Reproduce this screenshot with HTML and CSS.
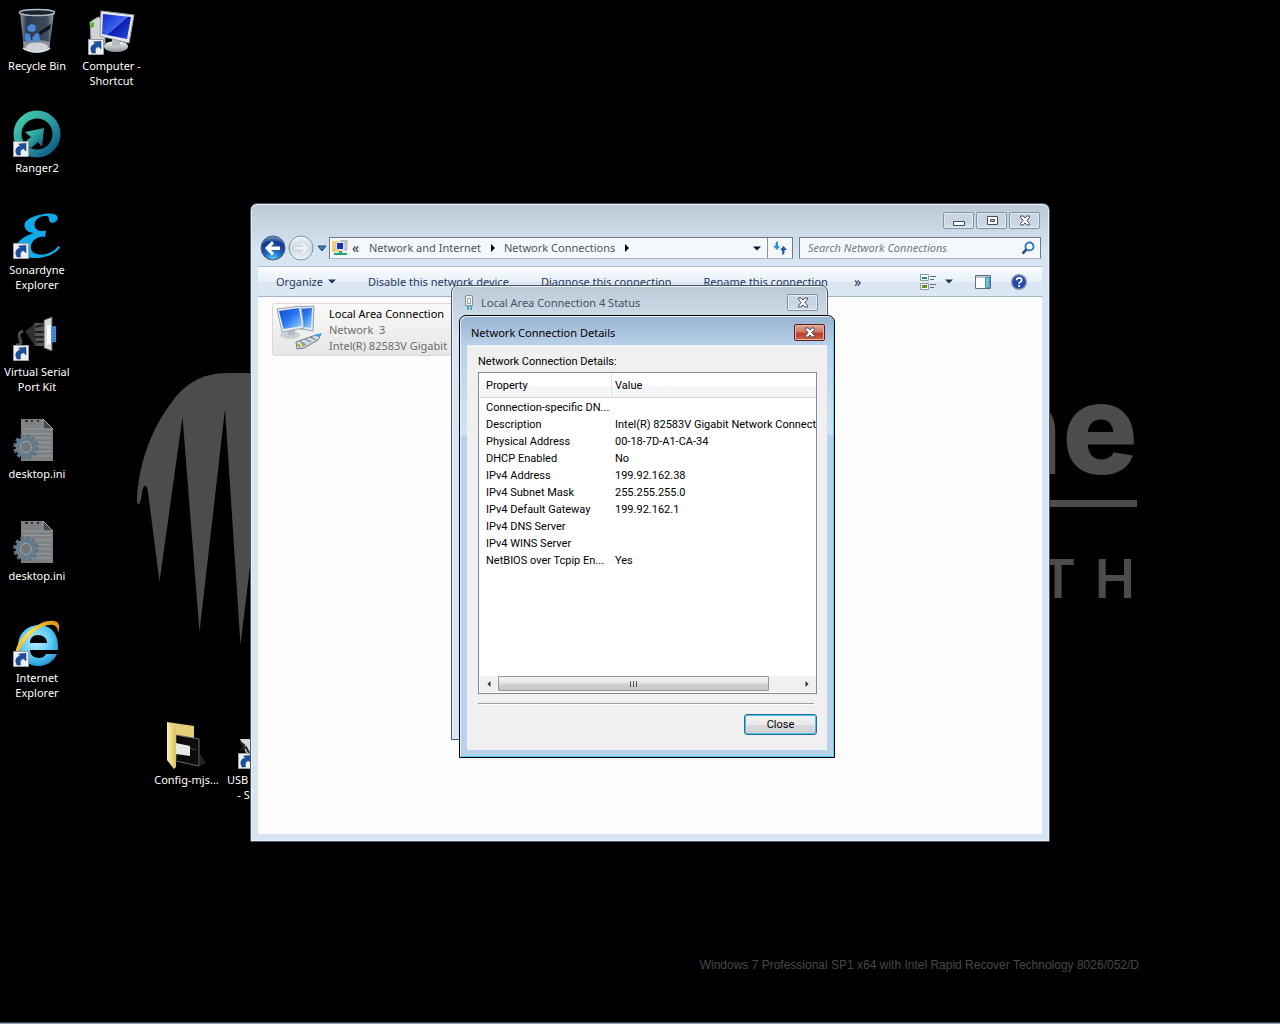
FILE: index.html
```html
<!DOCTYPE html>
<html lang="en">
<head>
<meta charset="utf-8">
<meta name="viewport" content="width=device-width, initial-scale=1">
<title>Network Connection Details</title>
<link rel="stylesheet" href="styles.css">
</head>
<body>
<svg class="defs" width="0" height="0" aria-hidden="true">
  <defs>
    <linearGradient id="screen" x1="0" y1="0" x2="1" y2="1"><stop offset="0" stop-color="#1426c8"/><stop offset=".5" stop-color="#3c66ec"/><stop offset=".52" stop-color="#0c1cb0"/><stop offset="1" stop-color="#2a50e0"/></linearGradient>
    <linearGradient id="lan" x1="0" y1="0" x2="1" y2="1"><stop offset="0" stop-color="#1048d0"/><stop offset=".5" stop-color="#2a78f0"/><stop offset="1" stop-color="#a4dcff"/></linearGradient>
    <linearGradient id="teal" x1="0" y1="0" x2="1" y2="1"><stop offset="0" stop-color="#47cdb0"/><stop offset=".5" stop-color="#2b9e9c"/><stop offset="1" stop-color="#0c5487"/></linearGradient>
    <linearGradient id="glass" x1="0" y1="0" x2="1" y2="0"><stop offset="0" stop-color="#8798a8"/><stop offset=".2" stop-color="#2a3a4c"/><stop offset=".8" stop-color="#3c4c5c"/><stop offset="1" stop-color="#96a4b0"/></linearGradient>
    <linearGradient id="folder" x1="0" y1="0" x2="1" y2="0"><stop offset="0" stop-color="#fdf2b0"/><stop offset="1" stop-color="#dcc160"/></linearGradient>
    <linearGradient id="metal" x1="0" y1="0" x2="0" y2="1"><stop offset="0" stop-color="#ffffff"/><stop offset="1" stop-color="#8c9098"/></linearGradient>
    <radialGradient id="ie" cx=".45" cy=".4" r=".65"><stop offset="0" stop-color="#baf2ff"/><stop offset=".6" stop-color="#58c8f4"/><stop offset="1" stop-color="#1c8ccc"/></radialGradient>
    <linearGradient id="gold" x1="0" y1="1" x2="1" y2="0"><stop offset="0" stop-color="#f0a810"/><stop offset=".5" stop-color="#ffe050"/><stop offset="1" stop-color="#d88c08"/></linearGradient>
    <radialGradient id="orb" cx=".5" cy=".95" r=".95"><stop offset="0" stop-color="#55c8f8"/><stop offset=".4" stop-color="#1c64b8"/><stop offset=".75" stop-color="#123a8c"/><stop offset="1" stop-color="#7aa0d4"/></radialGradient>
    <linearGradient id="pale" x1="0" y1="0" x2="0" y2="1"><stop offset="0" stop-color="#f2f6fa"/><stop offset=".5" stop-color="#ccd8e2"/><stop offset="1" stop-color="#f0f5fa"/></linearGradient>
    <symbol id="shortcut" viewBox="0 0 16 16">
      <path d="M.5.5h15v15H.5z" fill="#eef0f2" stroke="#9a9ea4"/>
      <path d="M4 14C1.500 9.500 3 5.500 7.500 5L5.500 3l7.500-.8V10l-2.200-2.200C7.800 8 7 10 7.500 14z" fill="#1d4f9e" stroke="#123a7c" stroke-width=".5"/>
    </symbol>
    <symbol id="inifile" viewBox="0 0 48 48">
      <path d="M8 3h22l10 10v32H8z" fill="#7f8285"/>
      <path d="M30 3v10h10z" fill="#4a4c4f" stroke="#a4a6a8"/>
      <path d="M10 13h19M10 17.500h28M10 22h28M10 26.500h28M10 31h28M10 35.500h28M10 40h28" stroke="#999c9f"/>
      <path d="M12 5h3M18 5h2M24 5h2" stroke="#303234" stroke-width="2"/>
      <circle cx="13" cy="31" r="10.500" fill="none" stroke="#5f7382" stroke-width="4.500" stroke-dasharray="3.300 2.197"/>
      <circle cx="13" cy="31" r="7.500" fill="none" stroke="#667c8c" stroke-width="6"/>
      <circle cx="13" cy="31" r="5.500" fill="#747779" stroke="#93a6b2"/>
    </symbol>
    <symbol id="cross" viewBox="0 0 14 11">
      <path d="M2.500 1h2.800L7 3.100 8.700 1h2.800v1.400L8.900 5.500l2.600 3.100V10H8.700L7 7.900 5.300 10H2.500V8.600l2.600-3.100-2.600-3.100z" fill="#fff" stroke="#474d57"/>
    </symbol>
    <symbol id="caret" viewBox="0 0 8 5"><path d="M0 .5h8L4 4.500z" fill="currentColor"/></symbol>
  </defs>
</svg>

<main class="desktop">
  <svg class="claw" viewBox="0 0 114 274" aria-hidden="true">
    <path d="M114 0H90C64 0 47 12 35 29C15 54 1 92 0 127Q0 131 2 131C5 129 4 114 8 113Q10 112 11 119L22.500 209 45.500 44 62.500 259 88 36 103.500 272 114 185z" fill="#4c4c4c"/>
  </svg>
  <svg class="brand" viewBox="0 0 150 240" aria-hidden="true">
    <g fill="#4c4c4c">
      <text class="brand-name" x="138" y="103" text-anchor="end">ne</text>
      <path d="M0 129h137v7H0z"/>
      <text class="brand-tag" x="58" y="227" text-anchor="middle">T</text>
      <text class="brand-tag" x="115" y="227" text-anchor="middle">H</text>
    </g>
  </svg>
  <p class="build">Windows 7 Professional SP1 x64 with Intel Rapid Recover Technology 8026/052/D</p>

  <nav class="icons" aria-label="Desktop">
    <a class="icon c1 r1" href="#"><svg viewBox="0 0 48 48">
      <path d="M7 4L11 42Q24 48 36 42L41 4z" fill="url(#glass)"/>
      <path d="M10 34l1 8Q24 48 36 42l1-8Q24 30 10 34z" fill="#a8adb0" opacity=".7"/>
      <ellipse cx="24" cy="4.500" rx="17.500" ry="3" fill="#18222c" stroke="#b0bcc6" stroke-width="1.500"/>
      <path d="M14 19l4-3 4 1 1 5-3 2-5-1zM12 25l5 1 1 6-2 3-4-3zM19 30l4-5 3 1 1 6-5 3z" fill="#4d84dc"/>
      <path d="M26 24l12-8-1 5-10 6z" fill="#0c141c"/>
      <ellipse cx="24" cy="39" rx="11" ry="4.500" fill="#e4e6e7" opacity=".8"/>
      <path d="M10 40Q24 48 37 40" fill="none" stroke="#dce2e6" stroke-width="1.500"/></svg><span>Recycle Bin</span></a>
    <a class="icon c2 r1" href="#"><svg viewBox="0 0 48 48">
      <path d="M2 14L10 9l7 2v25L3 34z" fill="#d0d4d4" stroke="#8a8e90"/><path d="M3 15l3-1v5l-3 1z" fill="#5ab830"/>
      <ellipse cx="28" cy="38.500" rx="12" ry="5.500" fill="url(#metal)"/><path d="M24 29h8v9h-8z" fill="#b8bcc0"/>
      <path d="M13 3l33 4-5 28-29-7z" fill="#e6e8ec" stroke="#9da2a8"/><path d="M15 6l28 3-4 22-25-5z" fill="url(#screen)"/>
      <use href="#shortcut" x="0" y="31" width="16" height="16"/></svg><span>Computer -<br>Shortcut</span></a>
    <a class="icon c1 r2" href="#"><svg viewBox="0 0 48 48">
      <circle cx="24" cy="24" r="19.500" fill="none" stroke="url(#teal)" stroke-width="8"/>
      <path d="M31 18L12 22l6 5-7 6 7 5 7-6 4 5z" fill="url(#teal)"/>
      <use href="#shortcut" x="0" y="31" width="16" height="16"/></svg><span>Ranger2</span></a>
    <a class="icon c1 r3" href="#"><svg viewBox="0 0 48 48">
      <path d="M44.500 5C43 1.500 37 1 31 2C20 3.500 10 8 11.500 14.500C12.500 19 17 21 21 21C9 25 2 31 3 37C4 44 14 46.500 25 46C36 45 45 40 47 35L45.500 34C40 40 34 43 27 42.500C19 42 16.500 37 18.500 32C21 26 27 24 32 25L33 18.500C27 20 21 17.500 21.500 12C22 7 28 3.500 33 4C37 4 35 7 37 10C40 12.500 45.500 9 44.500 5z" fill="#12a9e8"/>
      <use href="#shortcut" x="0" y="31" width="16" height="16"/></svg><span>Sonardyne<br>Explorer</span></a>
    <a class="icon c1 r4" href="#"><svg viewBox="0 0 48 48">
      <path d="M3 31q7 0 4-6t3-8" fill="none" stroke="#4c4c4c" stroke-width="3"/>
      <path d="M12 17l10-7h11v22H22z" fill="#303030"/><path d="M21 9h11v23h-9z" fill="#555"/><path d="M22 13l9-2M22 18h9M22 23h9M23 28h8" stroke="#1e1e1e" stroke-width="2"/>
      <path d="M31 6l8-3v34l-8-3z" fill="#dcdcdc" stroke="#4c4c4c"/><path d="M35 13l8-1v16l-8 1z" fill="#3f8fe0"/><path d="M34 12l4-1v18l-4 2z" fill="#fff"/><path d="M41 14v13" stroke="#144a94" stroke-dasharray="1 2"/>
      <use href="#shortcut" x="0" y="31" width="16" height="16"/></svg><span>Virtual Serial<br>Port Kit</span></a>
    <a class="icon c1 r5" href="#"><svg viewBox="0 0 48 48"><use href="#inifile"/></svg><span>desktop.ini</span></a>
    <a class="icon c1 r6" href="#"><svg viewBox="0 0 48 48"><use href="#inifile"/></svg><span>desktop.ini</span></a>
    <a class="icon c1 r7" href="#"><svg viewBox="0 0 48 48">
      <path d="M45 30H17c0 5 4 8 9 8 4 0 6-2 7-4h11C41 41 34 46 26 46 14 46 5 38 5 26S14 5 26 5s20 9 19 25zM17 23h17c0-5-4-8-9-8s-8 3-8 8z" fill="url(#ie)"/>
      <path d="M3 38C-2 22 26-2 41 1c6 1 6 6 4 12 0-4-1-7-5-8C28 3 10 18 3 38z" fill="url(#gold)"/>
      <use href="#shortcut" x="0" y="31" width="16" height="16"/></svg><span>Internet<br>Explorer</span></a>
    <a class="icon c3 r8" href="#"><svg viewBox="0 0 48 48">
      <path d="M4 0l27 4v32H14z" fill="#e4cc78"/>
      <path d="M13 13l23 4v27l-23-5z" fill="#0c0c0c" stroke="#6c6c6c"/><path d="M13 21l14 3v10l-14-2z" fill="#e8e8e8"/><path d="M27 26l6 2" stroke="#444"/>
      <path d="M4 0l9 6v39l-2 2-7-9z" fill="url(#folder)"/><path d="M37 32l6 9-6 3z" fill="#222"/></svg><span>Config-mjs...</span></a>
    <a class="icon c4 r8" href="#"><svg viewBox="0 0 48 48">
      <path d="M2 17h26v18H10z" fill="#d8d8d8"/><path d="M2 20l4 3-2 4 4-2 3 6" fill="none" stroke="#222" stroke-width="2"/>
      <use href="#shortcut" x="0" y="31" width="16" height="16"/></svg><span>USB<i class="more"></i><br>- S<i class="more"></i></span></a>
  </nav>

  <section class="window explorer" aria-label="Network Connections">
    <header class="caption">
      <button aria-label="Minimize"><svg viewBox="0 0 14 11"><path d="M1.500 6.500h11v4h-11z" fill="#fff" stroke="#474d57"/></svg></button>
      <button aria-label="Maximize"><svg viewBox="0 0 14 11"><path d="M2.500 1.500h10v8h-10zM5.500 4.500v2h4v-2z" fill="#fff" stroke="#474d57"/></svg></button>
      <button aria-label="Close"><svg viewBox="0 0 14 11"><use href="#cross"/></svg></button>
    </header>
    <div class="navbar">
      <button class="round" aria-label="Back"><svg viewBox="0 0 26 26"><circle cx="13" cy="13" r="12" fill="url(#orb)" stroke="#4c5c74"/><path d="M5 13l7-7 2 2.500-3 3h9v3.500h-9l3 3-2 2.500z" fill="#fff"/></svg></button>
      <button class="round" aria-label="Forward"><svg viewBox="0 0 26 26"><circle cx="13" cy="13" r="12" fill="url(#pale)" stroke="#8493a4"/><path d="M21 13l-7-7-2 2.500 3 3H6V15h9l-3 3 2 2.500z" fill="#eef2f6" stroke="#c0cad4" stroke-width=".6"/></svg></button>
      <button class="recent" aria-label="Recent pages"><svg viewBox="0 0 10 7"><path d="M1 1h8L5 6z" fill="#3c84bc" stroke="#1c4468"/></svg></button>
      <div class="address">
        <svg class="place" viewBox="0 0 16 16"><path d="M0 1h7v11H0z" fill="#ecd070"/><path d="M9 0h6v10H9z" fill="#c8ccd0" stroke="#888" stroke-width=".5"/><path d="M4.500 2.500h7v7h-7z" fill="#1c30b8" stroke="#e4e8f0"/><path d="M7 11h3v2h5v2H2v-2h5z" fill="#22a878"/></svg>
        <a class="up" href="#">«</a>
        <a href="#">Network and Internet</a><i class="sep"></i>
        <a href="#">Network Connections</a><i class="sep"></i>
        <button class="drop" aria-label="Previous locations"><svg viewBox="0 0 8 5"><use href="#caret"/></svg></button>
        <button class="refresh" aria-label="Refresh"><svg viewBox="0 0 16 14"><path d="M6.500 0Q3 .5 3.500 5H1l4 4 3-4H6Q5.500 2 6.500 0z" fill="#2c8cd0"/><path d="M10 14q3-.5 2.500-5H15l-3.500-4L8 9h2q.5 3 0 5z" fill="#1c5ca4"/></svg></button>
      </div>
      <label class="search"><input type="search" placeholder="Search Network Connections" aria-label="Search Network Connections"><svg viewBox="0 0 14 14"><circle cx="8.500" cy="5.500" r="4" fill="#fff" stroke="#2c7cc8" stroke-width="2"/><path d="M5.500 8.500L1.500 12.500" stroke="#2c4c8c" stroke-width="2.500"/></svg></label>
    </div>
    <div class="pane">
      <div class="toolbar">
        <button>Organize <svg class="tri" viewBox="0 0 8 5"><use href="#caret"/></svg></button>
        <button>Disable this network device</button>
        <button>Diagnose this connection</button>
        <button>Rename this connection</button>
        <button class="overflow" aria-label="More commands">»</button>
        <span class="tools">
          <button aria-label="Change your view"><svg class="view" viewBox="0 0 16 16"><path d="M.5.500h8v6h-8zM.5 9.500h8v6h-8z" fill="#fff" stroke="#9098a0"/><path d="M2 3h5v2H2z" fill="#1c8c94"/><path d="M2 11h5v3H2z" fill="#5c9c20"/><path d="M4 11h3v1H4z" fill="#c02c20"/><path d="M10 2.500h6M10 5.500h4M10 10.500h6M10 13.500h4" stroke="#5c6878"/></svg></button>
          <button class="arrow" aria-label="More options"><svg class="tri" viewBox="0 0 8 5"><use href="#caret"/></svg></button>
          <button class="preview" aria-label="Show the preview pane"><svg viewBox="0 0 16 16"><path d="M.5 1.500h15v13H.5z" fill="#fff" stroke="#5c7080"/><path d="M1 2h14v2H1z" fill="#b8c8d4"/><path d="M10.500 3.500h4v10h-4z" fill="#6cc4dc" stroke="#4894b0"/></svg></button>
          <button aria-label="Get help"><svg viewBox="0 0 16 16"><circle cx="8" cy="8" r="7.300" fill="#2448b0" stroke="#8c98a8" stroke-width="1.400"/><path d="M5.500 6.200Q5.700 3.800 8.200 3.800T10.700 6Q10.700 7.300 9.300 8T8.200 9.700M8.200 11v2" fill="none" stroke="#fff" stroke-width="1.800"/></svg></button>
        </span>
      </div>
      <div class="files">
        <a class="adapter" href="#">
          <svg viewBox="0 0 48 48"><path d="M18 3l20-1-1 25-17-3z" fill="#e0e8f0" stroke="#94a0ac"/><path d="M20 5l16-1-1 20-14-2z" fill="url(#lan)"/>
            <ellipse cx="14" cy="31" rx="10" ry="4" fill="#ccd0d2"/><path d="M12 25h7v6h-7z" fill="#b8bcc0"/>
            <path d="M1 5l24-3 3 22-22 4z" fill="#e8eef4" stroke="#98a4b0"/><path d="M3 7l20-3 3 18L7.500 25z" fill="url(#lan)"/>
            <path d="M20 38l17-6 8-2-3 6-14 8-7 1z" fill="#d0d8e0" stroke="#687c90"/><path d="M24 37l6 4M29 35l6 3M34 33l6 3" stroke="#687c90"/><path d="M38 31l8-2-3 4z" fill="#38a4d8"/><path d="M22 40l2 3M26 39l2 3" stroke="#9cac20" stroke-width="2"/></svg>
          <span><b>Local Area Connection</b><br>Network&nbsp; 3<br>Intel(R) 82583V Gigabit</span>
        </a>
      </div>
    </div>
  </section>

  <section class="window status" aria-label="Local Area Connection 4 Status">
    <header class="titlebar">
      <svg class="plug" viewBox="0 0 12 16"><path d="M2.500 2q0-1.500 1.500-1.500h4Q9.500.5 9.500 2v8.500h-7z" fill="#eef2f6" stroke="#84909c"/><path d="M4.500 3.500h3v5h-3z" fill="#fff" stroke="#94a0ac"/><path d="M5 11v4M8 11v4" stroke="#2c9cc4" stroke-width="1.500"/></svg>
      <h2>Local Area Connection 4 Status</h2>
      <button aria-label="Close"><svg viewBox="0 0 14 11"><use href="#cross"/></svg></button>
    </header>
  </section>

  <section class="window details" role="dialog" aria-labelledby="details-title">
    <header class="titlebar">
      <h2 id="details-title">Network Connection Details</h2>
      <button class="red" aria-label="Close"><svg viewBox="0 0 14 11"><use href="#cross"/></svg></button>
    </header>
    <div class="client">
      <div class="label" id="list-label">Network Connection Details:</div>
      <div class="list">
        <table aria-labelledby="list-label">
          <thead><tr><th>Property</th><th>Value</th></tr></thead>
          <tbody>
            <tr><td>Connection-specific DN...</td><td></td></tr>
            <tr><td>Description</td><td>Intel(R) 82583V Gigabit Network Connect</td></tr>
            <tr><td>Physical Address</td><td>00-18-7D-A1-CA-34</td></tr>
            <tr><td>DHCP Enabled</td><td>No</td></tr>
            <tr><td>IPv4 Address</td><td>199.92.162.38</td></tr>
            <tr><td>IPv4 Subnet Mask</td><td>255.255.255.0</td></tr>
            <tr><td>IPv4 Default Gateway</td><td>199.92.162.1</td></tr>
            <tr><td>IPv4 DNS Server</td><td></td></tr>
            <tr><td>IPv4 WINS Server</td><td></td></tr>
            <tr><td>NetBIOS over Tcpip En...</td><td>Yes</td></tr>
          </tbody>
        </table>
        <div class="scroll">
          <button aria-label="Scroll left"><svg viewBox="0 0 5 8"><path d="M4.500 1v6L1.500 4z" fill="#333"/></svg></button>
          <span class="track"><span class="thumb"><i></i><i></i><i></i></span></span>
          <button aria-label="Scroll right"><svg viewBox="0 0 5 8"><path d="M.5 1v6l3-3z" fill="#333"/></svg></button>
        </div>
      </div>
      <hr>
      <button class="close">Close</button>
    </div>
  </section>
  <footer class="taskbar"></footer>
</main>
</body>
</html>
```
FILE: styles.css
```css
* { box-sizing: border-box; }

body {
  margin: 0;
  background: #000;
  color: #000;
  font: 11px/16px "Noto Sans", "Open Sans", sans-serif;
}

button {
  display: flex;
  align-items: center;
  justify-content: center;
  margin: 0;
  padding: 0;
  border: 0;
  background: none;
  color: inherit;
  font: inherit;
  white-space: nowrap;
}

a { color: inherit; text-decoration: none; }
svg { display: block; flex: none; }
h2 { margin: 0; font-size: 11px; font-weight: 400; }
.defs { position: absolute; }

.desktop {
  position: relative;
  height: 100vh;
  overflow: hidden;
  background: #000;
}

/* Wallpaper */
.claw { position: absolute; left: 137px; top: 373px; width: 114px; }
.brand { position: absolute; left: 1000px; top: 371px; width: 150px; overflow: visible; }
.brand-name { font: 800 126px Inter, sans-serif; }
.brand-tag { font: 600 54px Inter, sans-serif; }
.build {
  position: absolute;
  right: 141px;
  bottom: 51px;
  margin: 0;
  color: #484848;
  font: 12px/16px "Liberation Sans", Arial, sans-serif;
}

/* Desktop icons */
.icons {
  display: grid;
  grid-template-columns: 74px repeat(3, 75px);
  grid-auto-rows: 102px;
  padding-top: 8px;
}
.icon {
  display: flex;
  flex-direction: column;
  align-items: center;
  gap: 2px;
  color: #fff;
  line-height: 15px;
  text-align: center;
  white-space: nowrap;
}
.icon svg { width: 48px; height: 48px; }
.c1 { grid-column: 1; } .c2 { grid-column: 2; } .c3 { grid-column: 3; } .c4 { grid-column: 4; }
.r1 { grid-row: 1; } .r2 { grid-row: 2; } .r3 { grid-row: 3; } .r4 { grid-row: 4; }
.r5 { grid-row: 5; } .r6 { grid-row: 6; } .r7 { grid-row: 7; } .r8 { grid-row: 8; }
.more { display: inline-block; width: 48px; }
br + .more, .more:last-child { width: 36px; }

/* Windows */
.window {
  position: absolute;
  display: flex;
  flex-direction: column;
  border: 1px solid #4b5560;
  border-radius: 7px 7px 0 0;
  background: linear-gradient(#bccad7, #d7e4f1 48px);
  box-shadow: inset 0 0 0 1px #e8f0f8;
}
.explorer { left: 250px; top: 203px; width: 800px; height: 639px; padding: 0 7px 7px; }
.status { left: 451px; top: 285px; width: 377px; height: 455px; padding: 0 7px 7px; }
.details {
  left: 459px;
  top: 315px;
  width: 376px;
  height: 443px;
  padding: 0 7px 7px;
  border-color: #000;
  background: linear-gradient(#98b3d0, #b9d1ea 29px, #d2e3f5 118px, #b9d1ea 120px);
  box-shadow: inset 1px 1px 0 #e4f2fc, inset -1px -1px 0 #58d0ec;
}

.caption { display: flex; justify-content: flex-end; gap: 2px; padding: 8px 2px 0 0; height: 33px; }
.caption button, .titlebar button {
  width: 31px;
  height: 17px;
  border: 1px solid #8593a5;
  border-radius: 2px;
  background: linear-gradient(#ccd8e4, #c6d3e0 50%, #d4e0ec);
  box-shadow: inset 0 0 0 1px #e2ebf4;
}
.caption svg, .titlebar button svg { width: 14px; height: 11px; }
.titlebar button.red {
  border-color: #5c1c1c;
  background: linear-gradient(#dfa295, #d07868 48%, #b83c28 52%, #cc6050);
  box-shadow: inset 0 0 0 1px #e8b4a8;
}
.titlebar { display: flex; align-items: center; height: 29px; padding: 4px 2px 0 4px; }
.titlebar h2 { flex: 1; }
.status .titlebar { color: #49525b; }
.plug { width: 12px; height: 16px; margin: 0 6px 0 0; }

/* Address row */
.navbar { display: flex; align-items: center; height: 22px; margin: 0 1px 0 2px; color: #4c555e; }
.round { margin-right: 2px; }
.round svg { width: 26px; height: 26px; }
.recent { width: 11px; }
.recent svg { width: 10px; height: 7px; }
.address {
  display: flex;
  flex: 1;
  align-items: center;
  height: 22px;
  margin: 0 6px 0 2px;
  border: 1px solid #707a86;
  border-bottom-color: #a8b4c0;
  background: #f4f8fc;
  white-space: nowrap;
}
.place { width: 16px; height: 16px; margin: 0 4px 0 2px; }
.up { width: 17px; font-size: 14px; color: #333; }
.sep {
  margin: 0 9px 0 10px;
  border: 4px solid transparent;
  border-right: 0;
  border-left-color: #000;
}
.drop { width: 20px; margin-left: auto; color: #001040; }
.drop svg, .tri { width: 8px; height: 5px; }
.refresh { width: 25px; height: 20px; border-left: 1px solid #8894a0; }
.refresh svg { width: 16px; height: 14px; }
.search {
  display: flex;
  align-items: center;
  width: 242px;
  height: 22px;
  padding: 0 5px 0 8px;
  border: 1px solid #707a86;
  border-bottom-color: #a8b4c0;
  background: #f4f8fc;
}
.search input {
  flex: 1;
  min-width: 0;
  padding: 0;
  border: 0;
  outline: 0;
  background: none;
  font: inherit;
  font-style: italic;
}
.search input::placeholder { color: #74797e; opacity: 1; }
.search svg { width: 14px; height: 14px; }

/* Command bar and contents */
.pane { display: flex; flex: 1; flex-direction: column; margin-top: 7px; background: #fcfcfc; }
.toolbar {
  display: flex;
  align-items: center;
  gap: 32px;
  height: 31px;
  padding: 0 15px 0 18px;
  border-top: 1px solid #b4c2d0;
  border-bottom: 1px solid #a4b4c8;
  background: linear-gradient(#fbfdff, #e8f0f9 50%, #dce6f3 52%, #dce7f5);
  color: #1e395b;
}
.toolbar > button:first-child { gap: 5px; }
.toolbar .overflow { margin-left: -6px; font-size: 14px; }
.tools { display: flex; align-items: center; margin-left: auto; }
.tools svg { width: 16px; height: 16px; }
.tools .arrow { width: 26px; }
.tools .tri { width: 8px; height: 5px; }
.tools .preview { margin: 0 20px 0 13px; }
.files { padding: 6px 14px; }
.adapter {
  display: flex;
  gap: 5px;
  width: 258px;
  height: 53px;
  padding: 0 3px;
  border: 1px solid #d9d9d9;
  border-radius: 3px;
  background: linear-gradient(#fafafa, #e6e6e6);
  color: #6d6d6d;
  white-space: nowrap;
}
.adapter svg { width: 48px; height: 48px; }
.adapter b { color: #000; font-weight: 400; }
.adapter span { padding-top: 2px; }

/* Details dialog */
.client {
  display: flex;
  flex: 1;
  flex-direction: column;
  padding: 9px 10px 15px 11px;
  background: #f0f0f0;
  font-family: Roboto, "Liberation Sans", Arial, sans-serif;
}
.label { height: 18px; }
.list {
  display: flex;
  flex: 1;
  flex-direction: column;
  justify-content: space-between;
  padding: 1px 0 1px 1px;
  border: 1px solid #828790;
  background: #fff;
}
table { width: 100%; table-layout: fixed; border-collapse: separate; border-spacing: 0; line-height: 17px; }
th, td { padding: 0 0 0 6px; font-weight: 400; text-align: left; white-space: nowrap; }
th:last-child, td:last-child { padding-left: 3px; }
th {
  height: 24px;
  border-bottom: 1px solid #d5d5d5;
  background: linear-gradient(#fff 50%, #f5f6f8 51%);
}
th:first-child { width: 132px; border-right: 1px solid #e0e3e8; }
tbody::before { content: ""; display: block; height: 1px; }
td { height: 17px; }
.scroll { display: flex; height: 16px; background: #f0f0f0; }
.scroll button { width: 17px; }
.scroll svg { width: 5px; height: 8px; }
.track { display: flex; flex: 1; padding-left: 1px; }
.thumb {
  display: flex;
  align-items: center;
  justify-content: center;
  gap: 2px;
  width: 90%;
  height: 15px;
  border: 1px solid #979797;
  border-radius: 1px;
  background: linear-gradient(#f4f4f4, #e6e6e6 48%, #d2d2d4 52%, #c4c4c8);
}
.thumb i { width: 1px; height: 6px; background: #555; }
hr { align-self: stretch; height: 2px; margin: 9px 3px 9px 0; border: 0; border-top: 1px solid #a0a0a0; background: #fff; }
.close {
  align-self: flex-end;
  width: 73px;
  height: 21px;
  border: 1px solid #2c6c94;
  border-radius: 3px;
  background: linear-gradient(#f2f2f2, #ebebeb 50%, #dcdcdc 52%, #cfcfcf);
  box-shadow: inset 0 0 0 1px #48c4ec;
}

.taskbar {
  position: absolute;
  right: 0;
  bottom: 0;
  left: 0;
  height: 2px;
  border-top: 1px solid #3c4854;
  background: #8c9cb0;
}
```
